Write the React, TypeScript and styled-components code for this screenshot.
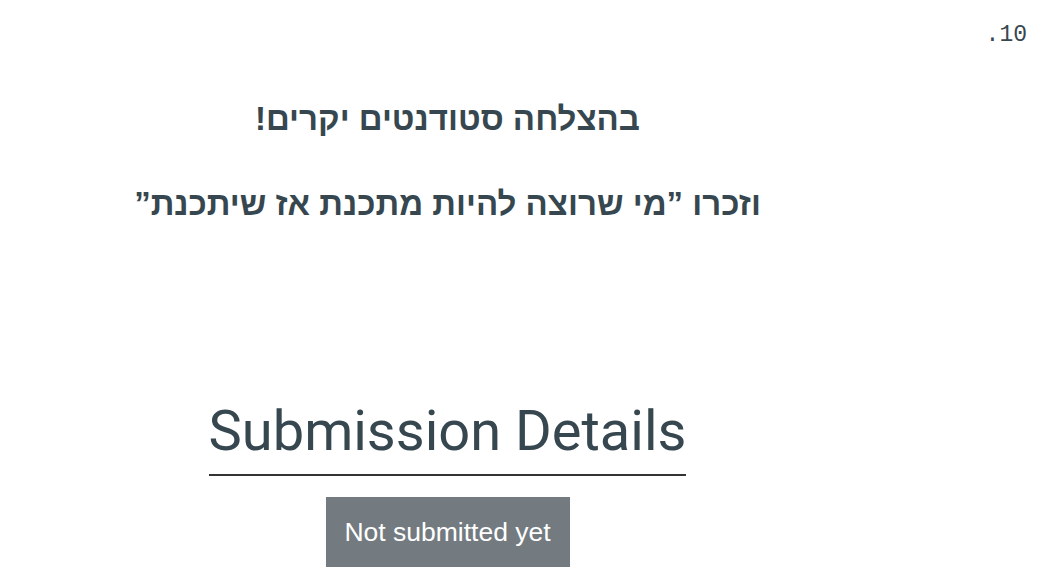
import React from "react";
import styled, { createGlobalStyle } from "styled-components";

const GlobalStyle = createGlobalStyle`
  html, body {
    margin: 0;
    padding: 0;
    background: #fff;
  }
  body {
    font-family: "Liberation Sans", Arial, sans-serif;
    color: #37474f;
  }
`;

export default function App() {
  return (
    <>
      <GlobalStyle />
      <SPage dir="rtl">
        <SNumber>10.</SNumber>
        <SContent>
          <SGreeting>בהצלחה סטודנטים יקרים!</SGreeting>
          <SGreeting>וזכרו ”מי שרוצה להיות מתכנת אז שיתכנת”</SGreeting>
          <SDetails dir="ltr">
            <STitle>Submission Details</STitle>
            <SStatus>Not submitted yet</SStatus>
          </SDetails>
        </SContent>
      </SPage>
    </>
  );
}

const SPage = styled.div`
  display: flex;
  width: 1045px;
  height: 580px;
  overflow: hidden;
`;

const SNumber = styled.div`
  width: 150px;
  padding: 22px 18px 0 0;
  box-sizing: border-box;
  font-family: "Liberation Mono", monospace;
  font-size: 23px;
  color: #37474f;
`;

const SContent = styled.div`
  width: 895px;
  display: flex;
  flex-direction: column;
  align-items: center;
  padding-top: 100px;
`;

const SGreeting = styled.h2`
  margin: 0 0 47px 0;
  font-family: "Liberation Sans", Arial, sans-serif;
  font-size: 33px;
  font-weight: 600;
  color: #37474f;
`;

const SDetails = styled.div`
  margin-top: 128px;
  display: flex;
  flex-direction: column;
  align-items: center;
`;

const STitle = styled.h1`
  margin: 0;
  padding-bottom: 10px;
  border-bottom: 2px solid #333;
  font-family: Roboto, sans-serif;
  font-size: 56px;
  font-weight: 400;
  color: #37474f;
`;

const SStatus = styled.div`
  margin-top: 21px;
  width: 244px;
  height: 70px;
  display: flex;
  align-items: center;
  justify-content: center;
  background: #737b81;
  color: #fff;
  font-family: "Liberation Sans", Arial, sans-serif;
  font-size: 26.5px;
`;
